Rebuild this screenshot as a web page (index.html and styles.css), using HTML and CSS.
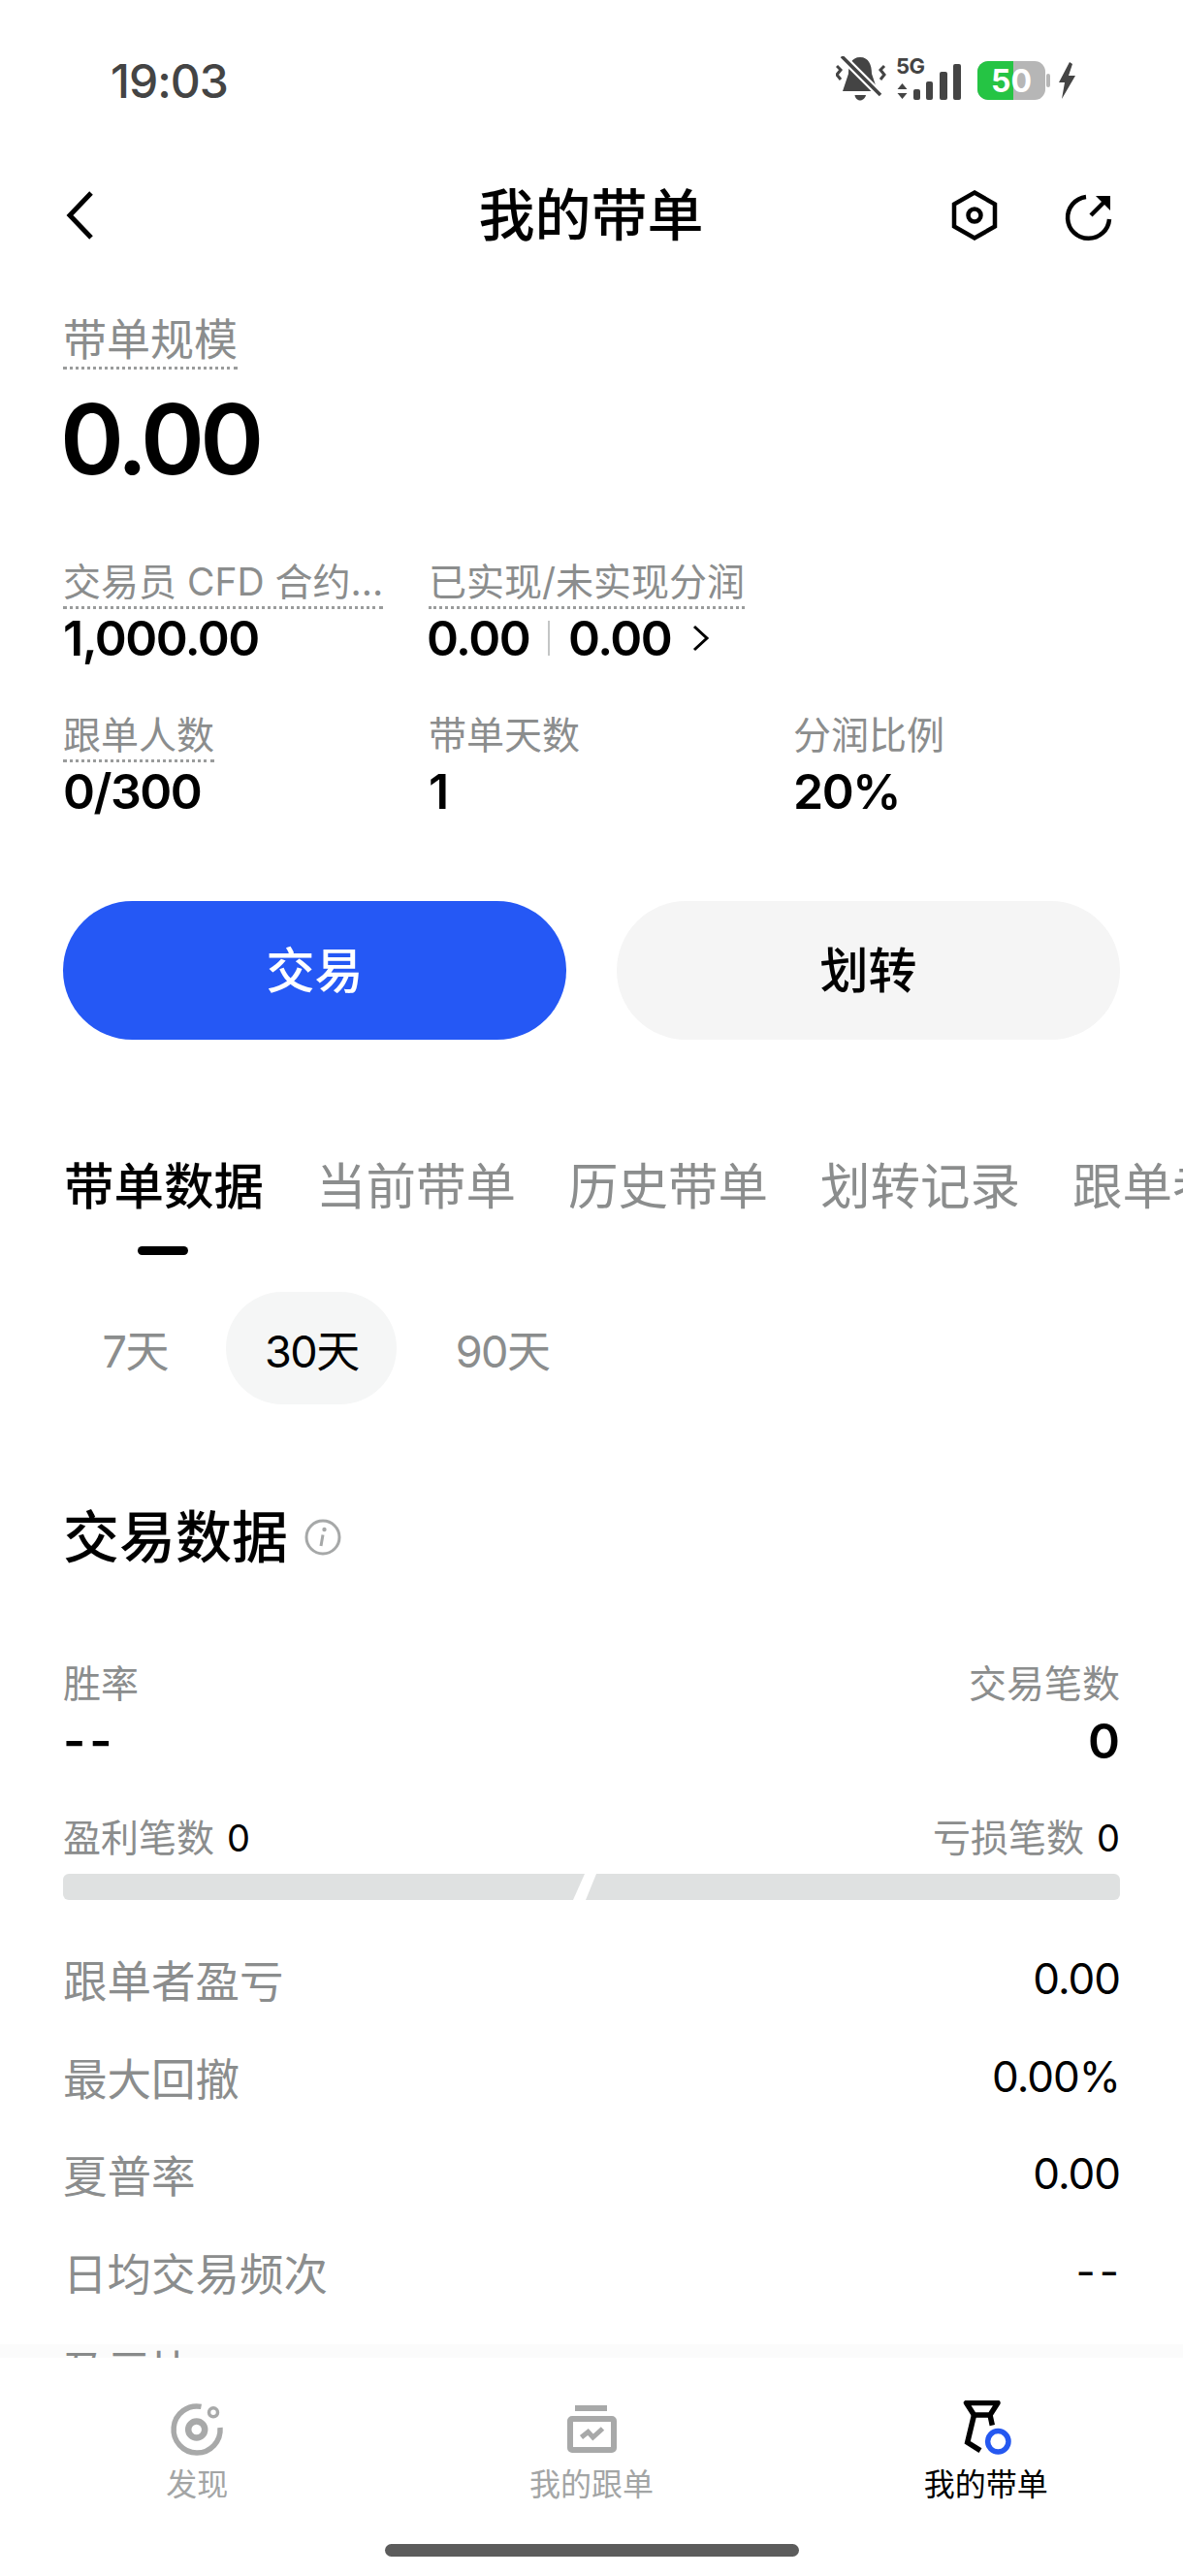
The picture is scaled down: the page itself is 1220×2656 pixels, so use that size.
FILE: index.html
```html
<!DOCTYPE html>
<html lang="zh">
<head>
<meta charset="utf-8">
<title>我的带单</title>
<link rel="stylesheet" href="styles.css">
</head>
<body>
<div class="screen">
  <div class="status">
    <span class="time">19:03</span>
    <div class="status-icons">
      <svg class="ic-bell" width="52" height="46" viewBox="0 0 52 46">
        <path d="M25 1C34 1 37 9 37 18L43 36H7L13 18C13 9 16 1 25 1Z" fill="#444"/>
        <path d="M19.500 40H31C30 44 27 45.500 25 45.500C23 45.500 20 44 19.500 40Z" fill="#444"/>
        <path d="M6 0L46 40" stroke="#fff" stroke-width="8"/>
        <path d="M6 0L46 40" stroke="#444" stroke-width="3.500"/>
        <path d="M1 10L5 14L1 19L5 24" fill="none" stroke="#444" stroke-width="3"/>
        <path d="M50 10L46 14L50 19L46 24" fill="none" stroke="#444" stroke-width="3"/>
      </svg>
      <svg class="ic-signal" width="68" height="46" viewBox="0 0 68 46">
        <text class="five-g" x="0" y="18">5G</text>
        <path d="M6.500 28L11.500 34H1.500ZM6.500 44L1.500 38H11.500Z" fill="#444"/>
        <rect x="18" y="34" width="7" height="11" rx="2" fill="#444"/>
        <rect x="31" y="26" width="7" height="19" rx="2" fill="#444"/>
        <rect x="45" y="16" width="8" height="29" rx="2" fill="#444"/>
        <rect x="59" y="8" width="8" height="37" rx="2" fill="#444"/>
      </svg>
      <svg class="ic-battery" width="75" height="40" viewBox="0 0 75 40">
        <rect x="0" y="0" width="70" height="40" rx="11" fill="#b6b6b6"/>
        <path d="M11 0H37V40H11A11 11 0 0 1 0 29V11A11 11 0 0 1 11 0Z" fill="#25c444"/>
        <rect x="71" y="13" width="4" height="14" rx="2" fill="#b6b6b6"/>
        <text class="batt-num" x="35" y="32">50</text>
      </svg>
      <svg class="ic-bolt" width="18" height="38" viewBox="0 0 18 38">
        <path d="M12 0L1 21H7L4 38L18 14H11L15 2Z" fill="#444"/>
      </svg>
    </div>
  </div>

  <header class="header">
    <div class="head-side">
      <svg width="30" height="50" viewBox="0 0 30 50"><path d="M26 2L4 25L26 48" fill="none" stroke="#000" stroke-width="5"/></svg>
    </div>
    <h1 class="title">我的带单</h1>
    <div class="head-side head-right">
      <svg width="56" height="56" viewBox="0 0 56 56">
        <path d="M28 4.500L49 16.500V39.500L28 51.500L7 39.500V16.500Z" fill="none" stroke="#000" stroke-width="4.500"/>
        <circle cx="28" cy="28" r="6.500" fill="none" stroke="#000" stroke-width="4.500"/>
      </svg>
      <svg width="56" height="56" viewBox="0 0 56 56">
        <path d="M25 9A21.500 21.500 0 1 0 49 32" fill="none" stroke="#000" stroke-width="4.500"/>
        <path d="M30 28L47 11" fill="none" stroke="#000" stroke-width="4.500"/>
        <path d="M35 8H50V23Z" fill="#000"/>
      </svg>
    </div>
  </header>

  <section class="summary">
    <span class="label dotted">带单规模</span>
    <div class="big-value">0.00</div>
    <div class="stats">
      <div class="stat"><span class="label-sm dotted">交易员 CFD 合约...</span><div class="stat-value">1,000.00</div></div>
      <div class="stat"><span class="label-sm dotted">已实现/未实现分润</span>
        <div class="stat-value split">0.00<i class="sep"></i>0.00
          <svg class="chev" width="18" height="28" viewBox="0 0 18 28"><path d="M2 2L15 14L2 26" fill="none" stroke="#000" stroke-width="3"/></svg>
        </div>
      </div>
      <div class="stat"></div>
      <div class="stat"><span class="label-sm dotted">跟单人数</span><div class="stat-value">0/300</div></div>
      <div class="stat"><span class="label-sm plain">带单天数</span><div class="stat-value">1</div></div>
      <div class="stat"><span class="label-sm plain">分润比例</span><div class="stat-value">20%</div></div>
    </div>
  </section>

  <div class="actions">
    <div class="btn btn-primary">交易</div>
    <div class="btn btn-secondary">划转</div>
  </div>

  <nav class="tabs">
    <div class="tab active">带单数据<span class="indicator"></span></div>
    <div class="tab">当前带单</div>
    <div class="tab">历史带单</div>
    <div class="tab">划转记录</div>
    <div class="tab">跟单者</div>
  </nav>

  <div class="chips">
    <div class="chip">7天</div>
    <div class="chip chip-on">30天</div>
    <div class="chip">90天</div>
  </div>

  <section class="data">
    <h2 class="data-title">交易数据
      <svg width="38" height="38" viewBox="0 0 38 38">
        <circle cx="19" cy="19" r="17" fill="none" stroke="#a6a8a8" stroke-width="3"/>
        <circle cx="20.500" cy="11" r="2.200" fill="#a6a8a8"/>
        <path d="M19 16.500L17 28" fill="none" stroke="#a6a8a8" stroke-width="3"/>
      </svg>
    </h2>
    <div class="pair pair-labels"><span>胜率</span><span>交易笔数</span></div>
    <div class="pair pair-values"><span class="dash">--</span><span>0</span></div>
    <div class="pair pair-counts"><span>盈利笔数 <b>0</b></span><span>亏损笔数 <b>0</b></span></div>
    <div class="bar"><div class="bar-l"></div><div class="bar-r"></div></div>
    <div class="rows">
      <div class="row"><span>跟单者盈亏</span><span class="v">0.00</span></div>
      <div class="row"><span>最大回撤</span><span class="v">0.00%</span></div>
      <div class="row"><span>夏普率</span><span class="v">0.00</span></div>
      <div class="row"><span>日均交易频次</span><span class="v dash">--</span></div>
      <div class="row"><span>盈亏比</span><span class="v">--</span></div>
    </div>
  </section>

  <footer class="nav">
    <div class="nav-items">
      <div class="nav-item">
        <svg width="60" height="60" viewBox="0 0 60 60">
          <path d="M34.500 6.400A24 24 0 1 0 54 28" fill="none" stroke="#a8a9a9" stroke-width="5.500"/>
          <circle cx="29.700" cy="30" r="8.500" fill="none" stroke="#a8a9a9" stroke-width="6.500"/>
          <circle cx="47" cy="12.300" r="4.500" fill="none" stroke="#a8a9a9" stroke-width="3.500"/>
        </svg>
        <span>发现</span>
      </div>
      <div class="nav-item">
        <svg width="60" height="60" viewBox="0 0 60 60">
          <rect x="13" y="5" width="33" height="6" fill="#a8a9a9"/>
          <rect x="8" y="19" width="45" height="32" rx="2" fill="none" stroke="#a8a9a9" stroke-width="6"/>
          <path d="M19.500 38L26.500 32.500L31.500 38L41.500 29" fill="none" stroke="#a8a9a9" stroke-width="5"/>
        </svg>
        <span>我的跟单</span>
      </div>
      <div class="nav-item nav-on">
        <svg width="60" height="60" viewBox="0 0 60 60">
          <path d="M9.500 2.500H42L34 15H17.500Z" fill="none" stroke="#000" stroke-width="5.500" stroke-linejoin="round"/>
          <path d="M17.500 15L10.700 43.300L24 51.700M34 15L36.300 25.700" fill="none" stroke="#000" stroke-width="5.500"/>
          <circle cx="42.300" cy="42.300" r="10.700" fill="none" stroke="#2558f0" stroke-width="5.500"/>
        </svg>
        <span>我的带单</span>
      </div>
    </div>
    <div class="home-bar"></div>
  </footer>
</div>
</body>
</html>
```

FILE: styles.css
```css
* { box-sizing: border-box; }
html, body { margin: 0; padding: 0; background: #fff; }
body { font-family: "Inter", "Noto Sans CJK SC", sans-serif; color: #000; }
.screen { position: relative; width: 1220px; height: 2656px; overflow: hidden; background: #fff; }

.status { height: 166px; display: flex; justify-content: space-between; align-items: flex-start; padding: 0 111px 0 114px; }
.time { margin-top: 57px; font-size: 48px; line-height: 54px; font-weight: 500; color: #444; letter-spacing: -1px; }
.status-icons { display: flex; align-items: flex-start; padding-top: 58px; }
.ic-bell { display: block; margin-right: 10px; }
.ic-signal { display: block; margin-right: 16px; overflow: visible; }
.ic-battery { display: block; margin-top: 5px; margin-right: 8px; }
.ic-bolt { display: block; margin-top: 6px; }
.five-g { font-family: "Inter", sans-serif; font-size: 22px; font-weight: 700; fill: #444; letter-spacing: -.5px; }
.batt-num { font-family: "Inter", sans-serif; font-size: 32px; font-weight: 700; fill: #fff; text-anchor: middle; }

.header { height: 112px; display: flex; align-items: center; justify-content: space-between; padding: 0 69px 0 68px; }
.head-side { width: 220px; display: flex; align-items: center; }
.head-right { justify-content: flex-end; gap: 62px; }
.title { margin: 0; font-size: 58px; line-height: 80px; font-weight: 500; }

.summary { padding: 50px 65px 0; }
.dotted { border-bottom: 3px dotted #9a9c9c; }
.label { display: inline-block; font-size: 45px; line-height: 46px; padding-bottom: 4px; color: #8b8d8d; vertical-align: top; }
.big-value { margin: 12px 0 0 -3px; font-size: 100px; line-height: 120px; font-weight: 600; letter-spacing: -4.700px; }
.stats { margin-top: 64px; display: grid; grid-template-columns: 377px 376px 1fr; row-gap: 49px; }
.stat { min-height: 109px; }
.label-sm { display: inline-block; font-size: 39px; line-height: 46px; padding-bottom: 2px; color: #8b8d8d; vertical-align: top; white-space: nowrap; }
.plain { border-bottom: 3px solid transparent; }
.stat-value { margin-top: 2px; font-size: 50px; line-height: 56px; font-weight: 600; letter-spacing: -1.500px; white-space: nowrap; }
.split { display: flex; align-items: center; margin-left: -2px; }
.sep { display: block; width: 2px; height: 36px; margin: 0 19px 0 19px; background: #c4c6c6; }
.chev { margin-left: 22px; display: block; }

.actions { margin-top: 85px; padding: 0 65px; display: flex; gap: 52px; }
.btn { flex: 1; height: 143px; padding-bottom: 8px; border-radius: 72px; display: flex; align-items: center; justify-content: center; font-size: 50px; font-weight: 500; }
.btn-primary { background: #2558f5; color: #fff; }
.btn-secondary { background: #f5f5f5; color: #000; }

.tabs { margin-top: 116px; padding-left: 66px; display: flex; gap: 56px; height: 106px; overflow: hidden; }
.tab { position: relative; flex: none; width: 204px; font-size: 51.500px; line-height: 70px; font-weight: 400; color: #8b8d8d; white-space: nowrap; }
.active { color: #000; font-weight: 500; }
.indicator { display: block; width: 52px; height: 9px; margin: 27px auto 0; border-radius: 5px; background: #000; }

.chips { margin-top: 38px; padding-left: 66px; display: flex; gap: 21px; }
.chip { height: 116px; padding: 0 39.500px; border-radius: 58px; display: flex; align-items: center; font-size: 45px; color: #8b8d8d; letter-spacing: -1.500px; }
.chip-on { background: #f5f6f6; color: #000; }

.data { padding: 0 65px; }
.data-title { margin: 97px 0 0; height: 80px; display: flex; align-items: center; gap: 17px; font-size: 58px; line-height: 80px; font-weight: 500; }
.pair { display: flex; justify-content: space-between; }
.pair-labels { margin-top: 88px; font-size: 39px; line-height: 46px; color: #8b8d8d; }
.pair-values { margin-top: 6px; font-size: 50px; line-height: 60px; font-weight: 600; }
.dash { letter-spacing: 4px; }
.pair-counts { margin-top: 47px; font-size: 39px; line-height: 46px; color: #8b8d8d; }
.pair-counts b { color: #000; font-weight: 400; font-size: 38px; margin-left: 2px; }
.bar { margin-top: 14px; height: 27px; display: flex; gap: 1px; }
.bar-l, .bar-r { height: 27px; background: #dfe1e1; }
.bar-l { flex: 0 0 538px; border-radius: 6px 0 0 6px; clip-path: polygon(0 0, 100% 0, calc(100% - 12px) 100%, 0 100%); }
.bar-r { flex: 1; border-radius: 0 6px 6px 0; clip-path: polygon(11px 0, 100% 0, 100% 100%, 0 100%); }
.rows { margin-top: 31px; }
.row { height: 100.500px; display: flex; justify-content: space-between; align-items: center; font-size: 45.500px; color: #8b8d8d; }
.row .v { color: #000; font-size: 44px; letter-spacing: -1px; }
.row .v.dash { letter-spacing: 4px; margin-right: -3px; }

.nav { position: absolute; left: 0; right: 0; bottom: 0; height: 225px; background: #fff; padding-top: 44px; }
.nav::before { content: ""; position: absolute; left: 0; right: 0; top: -14px; height: 14px; background: rgba(0, 0, 0, .015); }
.nav-items { display: grid; grid-template-columns: repeat(3, 1fr); }
.nav-item { display: flex; flex-direction: column; align-items: center; gap: 7px; font-size: 32px; line-height: 40px; color: #a3a5a5; }
.nav-item svg { display: block; }
.nav-on { color: #000; }
.home-bar { width: 427px; height: 13px; margin: 41px auto 0; border-radius: 7px; background: #5c5c5c; }
```
